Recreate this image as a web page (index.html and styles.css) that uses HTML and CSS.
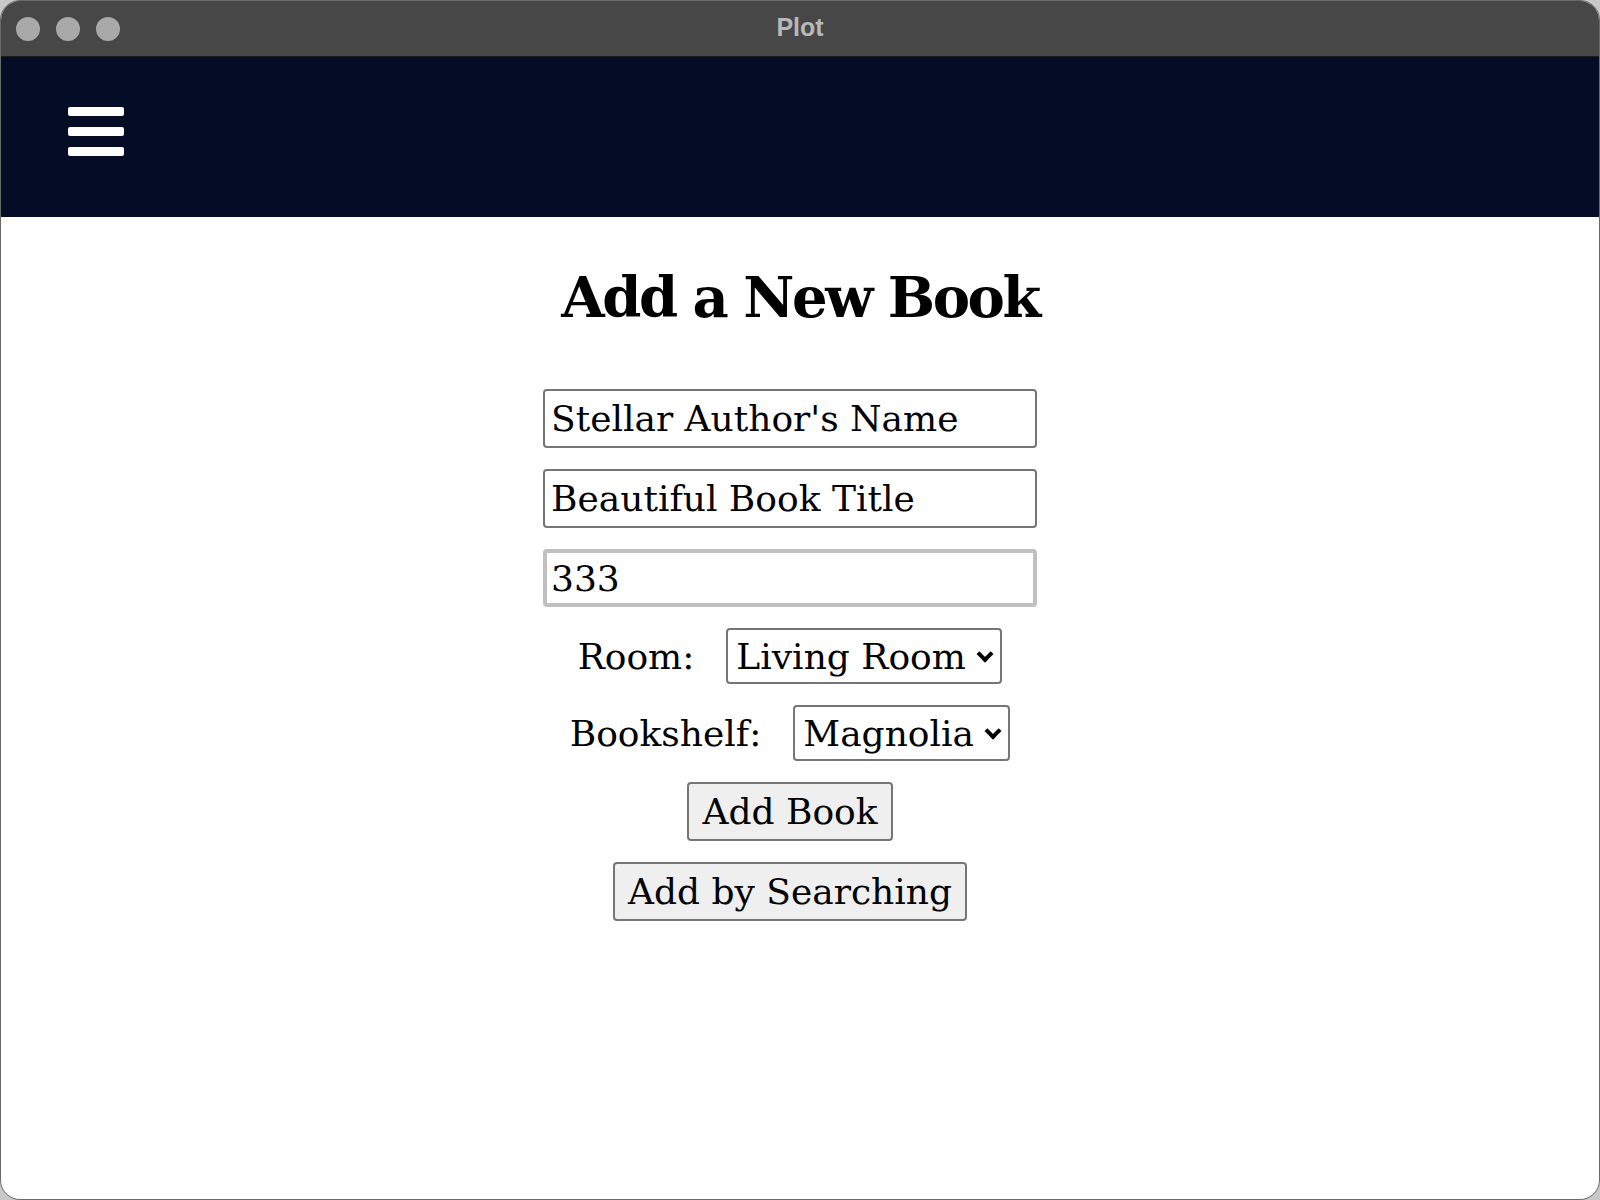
FILE: index.html
```html
<!DOCTYPE html>
<html>
<head>
<meta charset="utf-8">
<title>Plot</title>
<link rel="stylesheet" href="styles.css">
</head>
<body>
<div class="window">
  <div class="titlebar">
    <div class="lights"><span class="light"></span><span class="light"></span><span class="light"></span></div>
    <div class="wtitle">Plot</div>
  </div>
  <nav class="nav">
    <div class="burger"><span></span><span></span><span></span></div>
  </nav>
  <main class="main">
    <h1 class="heading">Add a New Book</h1>
    <form class="form">
      <input class="field" type="text" value="Stellar Author's Name">
      <input class="field" type="text" value="Beautiful Book Title">
      <input class="field field-num" type="text" value="333">
      <div class="row"><label class="lbl">Room:</label><span class="selwrap"><select class="sel"><option>Living Room</option></select></span></div>
      <div class="row row-b"><label class="lbl">Bookshelf:</label><span class="selwrap"><select class="sel"><option>Magnolia</option></select></span></div>
      <button class="btn" type="button">Add Book</button>
      <button class="btn" type="button">Add by Searching</button>
    </form>
  </main>
</div>
</body>
</html>
```

FILE: styles.css
```css
html, body {
  margin: 0;
  padding: 0;
  background: #c8c8c8;
}
body {
  width: 1600px;
  height: 1200px;
  overflow: hidden;
}
.window {
  width: 1598px;
  height: 1198px;
  border: 1px solid #6a6a6a;
  border-radius: 20px;
  overflow: hidden;
  background: #ffffff;
  display: flex;
  flex-direction: column;
}
.titlebar {
  height: 55px;
  background: #474747;
  border-bottom: 1px solid #1a1a1a;
  display: flex;
  align-items: center;
  position: relative;
}
.lights {
  display: flex;
  gap: 16px;
  padding-left: 15px;
}
.light {
  width: 24px;
  height: 24px;
  border-radius: 50%;
  background: #a9a9a9;
}
.wtitle {
  position: absolute;
  left: 0;
  right: 0;
  top: 0;
  line-height: 52px;
  text-align: center;
  font-family: "Liberation Sans", Arial, sans-serif;
  font-weight: bold;
  font-size: 25px;
  color: #b8b8b8;
}
.nav {
  height: 160px;
  background: #050c25;
  display: flex;
  align-items: center;
  padding-left: 67px;
}
.burger {
  display: flex;
  flex-direction: column;
  gap: 11px;
  margin-top: -12px;
}
.burger span {
  display: block;
  width: 56px;
  height: 9px;
  border-radius: 2px;
  background: #ffffff;
}
.main {
  flex: 1;
  display: flex;
  flex-direction: column;
  align-items: center;
  font-family: "DejaVu Serif", "Liberation Serif", serif;
  color: #000;
}
.heading {
  margin: 38px 0 0 0;
  font-size: 56px;
  font-weight: bold;
  letter-spacing: -2.5px;
  line-height: 84px;
}
.form {
  margin: 50px 20px 0 0;
  display: flex;
  flex-direction: column;
  align-items: center;
  gap: 21px;
}
.field {
  box-sizing: border-box;
  width: 494px;
  height: 59px;
  border: 2px solid #767676;
  border-radius: 4px;
  padding: 0 0 0 6px;
  font-family: "DejaVu Serif", "Liberation Serif", serif;
  font-size: 36px;
  color: #000;
  background: #fff;
}
.field-num {
  border: 4px solid #c0c0c0;
  padding-left: 4px;
  height: 58px;
}
.row {
  display: flex;
  align-items: center;
  gap: 32px;
}
.lbl {
  font-size: 36px;
}
.selwrap {
  position: relative;
  display: inline-flex;
}
.selwrap::after {
  content: "";
  position: absolute;
  right: 11px;
  top: 50%;
  width: 8px;
  height: 8px;
  margin-top: -8px;
  border-right: 4px solid #000;
  border-bottom: 4px solid #000;
  transform: rotate(45deg);
  pointer-events: none;
}
.sel {
  box-sizing: border-box;
  height: 56px;
  border: 2px solid #767676;
  border-radius: 4px;
  font-family: "DejaVu Serif", "Liberation Serif", serif;
  font-size: 36px;
  color: #000;
  background: #fff;
  padding: 0 34px 0 8px;
  appearance: none;
  -webkit-appearance: none;
}
.btn {
  box-sizing: border-box;
  height: 59px;
  border: 2px solid #767676;
  border-radius: 4px;
  background: #efefef;
  font-family: "DejaVu Serif", "Liberation Serif", serif;
  font-size: 36px;
  color: #000;
  padding: 0 13px;
}
```
